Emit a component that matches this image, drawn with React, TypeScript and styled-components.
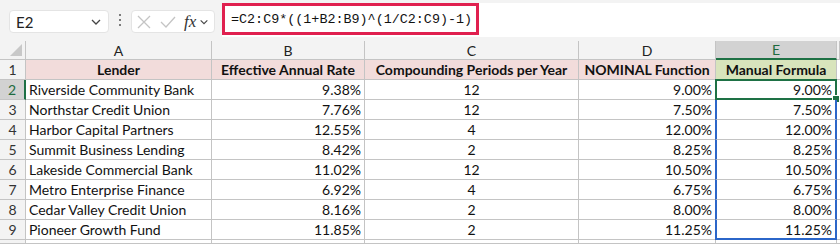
import { FC, Fragment } from "react";
import styled, { createGlobalStyle } from "styled-components";

const GlobalStyle = createGlobalStyle`
  body {
    margin: 0;
    background: #ffffff;
    font-family: "Lato", "Liberation Sans", sans-serif;
  }
`;

const Page = styled.div`
  width: 840px;
  height: 244px;
  overflow: hidden;
  background: #ffffff;
`;

const Toolbar = styled.div`
  height: 41px;
  display: flex;
  align-items: flex-start;
  background: #f3f3f3;
  box-sizing: border-box;
  padding-left: 9px;
`;

const NameBox = styled.div`
  margin-top: 10px;
  width: 100px;
  height: 23px;
  box-sizing: border-box;
  background: #ffffff;
  border: 1px solid #e4e4e4;
  border-radius: 4px;
  display: flex;
  align-items: center;
  justify-content: space-between;
  padding: 0 6px 0 6px;
  font-family: "Lato", sans-serif;
  font-size: 15px;
  color: #222;
`;

const Dots = styled.div`
  margin-top: 14px;
  width: 22px;
  display: flex;
  flex-direction: column;
  align-items: center;
  gap: 3px;
  & > span {
    width: 2px;
    height: 2px;
    background: #555;
    border-radius: 1px;
  }
`;

const FxBox = styled.div`
  margin-top: 10px;
  width: 84px;
  height: 23px;
  box-sizing: border-box;
  background: #ffffff;
  border: 1px solid #e4e4e4;
  border-radius: 4px;
  display: flex;
  align-items: center;
  padding-left: 4px;
  gap: 7px;
`;

const FxLabel = styled.span`
  font-family: "Liberation Serif", serif;
  font-style: italic;
  font-size: 17px;
  color: #333;
  margin-right: -4px;
`;

const FormulaField = styled.div`
  margin-left: 7px;
  margin-top: 3px;
  flex: 1;
  height: 34px;
  background: #ffffff;
  display: flex;
  align-items: flex-start;
`;

const FormulaHighlight = styled.div`
  width: 257px;
  height: 32px;
  box-sizing: border-box;
  border: 3px solid #e0204f;
  display: flex;
  align-items: center;
  padding-left: 6px;
  font-family: "Liberation Mono", monospace;
  font-size: 13.4px;
  color: #111;
`;

const Grid = styled.div`
  display: grid;
  grid-template-columns: 26px 186px 153px 214px 137px 121px 3px;
  grid-template-rows: 19px repeat(9, 20px) 4px;
  background: #ffffff;
`;

const Corner = styled.div`
  background: #f3f3f3;
  border-right: 1px solid #c4c4c4;
  border-bottom: 1px solid #c4c4c4;
  position: relative;
  &::after {
    content: "";
    position: absolute;
    right: 3px;
    bottom: 3px;
    width: 0;
    height: 0;
    border-left: 12px solid transparent;
    border-bottom: 12px solid #c8c8c8;
  }
`;

const ColHead = styled.div<{ active?: boolean }>`
  background: ${(p) => (p.active ? "#d2d2d2" : "#f3f3f3")};
  color: ${(p) => (p.active ? "#1e6b3f" : "#222")};
  border-right: 1px solid #c4c4c4;
  border-bottom: ${(p) => (p.active ? "2px solid #1e7145" : "1px solid #c4c4c4")};
  display: flex;
  align-items: center;
  justify-content: center;
  font-size: 14px;
  box-sizing: border-box;
`;

const RowHead = styled.div<{ active?: boolean }>`
  background: ${(p) => (p.active ? "#d2d2d2" : "#f3f3f3")};
  color: ${(p) => (p.active ? "#1e6b3f" : "#333")};
  border-right: ${(p) => (p.active ? "2px solid #1e7145" : "1px solid #c4c4c4")};
  border-bottom: 1px solid #c4c4c4;
  display: flex;
  align-items: center;
  justify-content: center;
  font-size: 14px;
  box-sizing: border-box;
`;

const Cell = styled.div<{
  align?: "left" | "center" | "right";
  fill?: string;
  bold?: boolean;
}>`
  background: ${(p) => p.fill ?? "#ffffff"};
  border-right: 1px solid #c4c4c4;
  border-bottom: 1px solid #c4c4c4;
  box-sizing: border-box;
  display: flex;
  align-items: center;
  justify-content: ${(p) =>
    p.align === "right" ? "flex-end" : p.align === "center" ? "center" : "flex-start"};
  padding: 0 3px;
  font-size: 14px;
  font-weight: ${(p) => (p.bold ? 700 : 400)};
  color: #111;
  white-space: nowrap;
  overflow: hidden;
  position: relative;
`;

const RangeCell = styled(Cell)<{ edge?: "mid" | "bottom" }>`
  border-left: 2px solid #2b66c9;
  border-right: 2px solid #2b66c9;
  border-bottom: ${(p) => (p.edge === "bottom" ? "2px solid #2b66c9" : "1px solid #c4c4c4")};
  margin-left: -1px;
`;

const SelectedCell = styled(Cell)`
  border: 2px solid #1e7145;
  margin-left: -1px;
  margin-top: -1px;
  overflow: visible;
  &::after {
    content: "";
    position: absolute;
    right: -5px;
    bottom: -5px;
    width: 6px;
    height: 6px;
    background: #1e7145;
    border: 1px solid #ffffff;
  }
`;

const Filler = styled.div`
  background: #ffffff;
  border-bottom: 1px solid #c4c4c4;
`;

const Chevron: FC<{ size?: number }> = ({ size = 12 }) => (
  <svg width={size} height={size} viewBox="0 0 12 12">
    <path d="M2 4 L6 8 L10 4" stroke="#444" strokeWidth="1.3" fill="none" />
  </svg>
);

const rows: [string, string, string, string][] = [
  ["Riverside Community Bank", "9.38%", "12", "9.00%"],
  ["Northstar Credit Union", "7.76%", "12", "7.50%"],
  ["Harbor Capital Partners", "12.55%", "4", "12.00%"],
  ["Summit Business Lending", "8.42%", "2", "8.25%"],
  ["Lakeside Commercial Bank", "11.02%", "12", "10.50%"],
  ["Metro Enterprise Finance", "6.92%", "4", "6.75%"],
  ["Cedar Valley Credit Union", "8.16%", "2", "8.00%"],
  ["Pioneer Growth Fund", "11.85%", "2", "11.25%"],
];

const PINK = "#f2dcdb";
const GREEN = "#d8e4bc";

const App: FC = () => (
  <Page>
    <GlobalStyle />
    <Toolbar>
      <NameBox>
        E2
        <Chevron />
      </NameBox>
      <Dots>
        <span />
        <span />
        <span />
      </Dots>
      <FxBox>
        <svg width="16" height="16" viewBox="0 0 16 16">
          <path d="M2 2 L14 14 M14 2 L2 14" stroke="#c4c4c4" strokeWidth="1.3" />
        </svg>
        <svg width="18" height="16" viewBox="0 0 18 16">
          <path d="M2 8 L7 13 L16 3" stroke="#c4c4c4" strokeWidth="1.3" fill="none" />
        </svg>
        <FxLabel>fx</FxLabel>
        <Chevron size={10} />
      </FxBox>
      <FormulaField>
        <FormulaHighlight>=C2:C9*((1+B2:B9)^(1/C2:C9)-1)</FormulaHighlight>
      </FormulaField>
    </Toolbar>
    <Grid>
      <Corner />
      <ColHead>A</ColHead>
      <ColHead>B</ColHead>
      <ColHead>C</ColHead>
      <ColHead>D</ColHead>
      <ColHead active>E</ColHead>
      <ColHead />

      <RowHead>1</RowHead>
      <Cell fill={PINK} bold align="center">Lender</Cell>
      <Cell fill={PINK} bold align="center">Effective Annual Rate</Cell>
      <Cell fill={PINK} bold align="center">Compounding Periods per Year</Cell>
      <Cell fill={PINK} bold align="center">NOMINAL Function</Cell>
      <Cell fill={GREEN} bold align="center">Manual Formula</Cell>
      <Filler />

      {rows.map(([lender, ear, periods, nominal], i) => (
        <Fragment key={lender}>
          <RowHead active={i === 0}>{i + 2}</RowHead>
          <Cell>{lender}</Cell>
          <Cell align="right">{ear}</Cell>
          <Cell align="center">{periods}</Cell>
          <Cell align="right">{nominal}</Cell>
          {i === 0 ? (
            <SelectedCell align="right">{nominal}</SelectedCell>
          ) : (
            <RangeCell align="right" edge={i === rows.length - 1 ? "bottom" : "mid"}>
              {nominal}
            </RangeCell>
          )}
          <Filler />
        </Fragment>
      ))}
      <RowHead />
      <Cell />
      <Cell />
      <Cell />
      <Cell />
      <Cell />
      <Filler />
    </Grid>
  </Page>
);

export default App;
